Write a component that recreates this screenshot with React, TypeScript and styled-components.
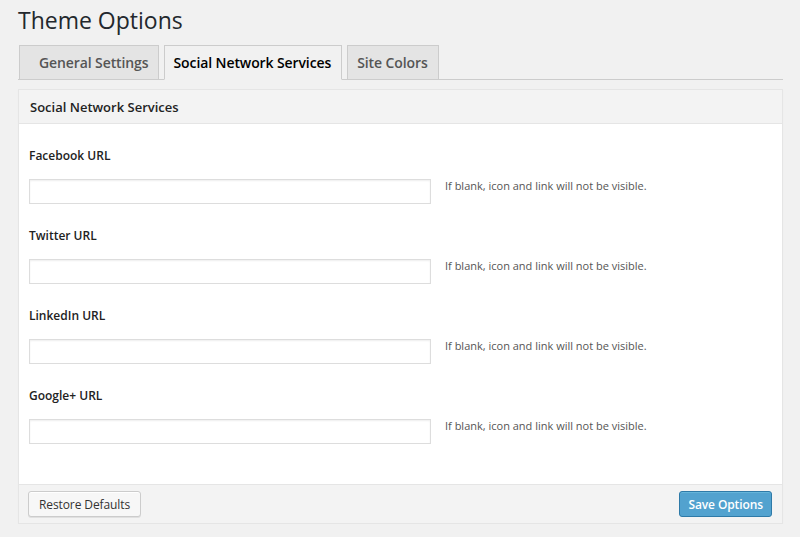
import { FC } from 'react';
import styled, { createGlobalStyle } from 'styled-components';

const GlobalStyle = createGlobalStyle`
  body {
    margin: 0;
    background: #f1f1f1;
    font-family: "Open Sans", "Liberation Sans", sans-serif;
    color: #222;
  }
`;

const Wrap = styled.div`
  width: 765px;
  padding: 6px 0 0 18px;
`;

const Title = styled.h1`
  margin: 0;
  font-size: 23px;
  font-weight: 400;
  line-height: 29px;
  color: #23282d;
`;

const TabBar = styled.div`
  display: flex;
  gap: 5px;
  margin-top: 10px;
  padding-left: 1px;
  border-bottom: 1px solid #cccccc;
  height: 34px;
`;

const Tab = styled.div<{ $active?: boolean; $first?: boolean }>`
  display: flex;
  align-items: center;
  padding: 0 ${(p) => (p.$first ? '9px' : '10px')} 0 ${(p) => (p.$first ? '19px' : '9px')};
  height: ${(p) => (p.$active ? '35px' : '34px')};
  box-sizing: border-box;
  border: 1px solid #cccccc;
  border-bottom: ${(p) => (p.$active ? '1px solid #f1f1f1' : 'none')};
  background: ${(p) => (p.$active ? '#f1f1f1' : '#e4e4e4')};
  color: ${(p) => (p.$active ? '#000' : '#555')};
  font-size: 14px;
  font-weight: 600;
  letter-spacing: -0.1px;
`;

const Panel = styled.div`
  margin-top: 9px;
  border: 1px solid #e5e5e5;
  box-shadow: 0 1px 1px rgba(0, 0, 0, 0.04);
  background: #fff;
`;

const PanelHeader = styled.div`
  height: 33px;
  display: flex;
  align-items: center;
  padding-left: 11px;
  background: #f3f3f3;
  border-bottom: 1px solid #e5e5e5;
  font-size: 13px;
  font-weight: 600;
  color: #222;
`;

const PanelBody = styled.div`
  padding: 23px 10px 17px;
  display: flex;
  flex-direction: column;
`;

const Field = styled.div`
  height: 80px;
`;

const Label = styled.div`
  font-size: 12px;
  font-weight: 600;
  line-height: 18px;
  color: #222;
`;

const InputRow = styled.div`
  display: flex;
  align-items: center;
  gap: 14px;
  margin-top: 14px;
`;

const Input = styled.input`
  width: 402px;
  height: 25px;
  box-sizing: border-box;
  border: 1px solid #dddddd;
  box-shadow: inset 0 1px 2px rgba(0, 0, 0, 0.07);
  background: #fff;
  margin: 0;
`;

const Help = styled.span`
  font-size: 11px;
  color: #555;
  margin-top: -13px;
`;

const PanelFooter = styled.div`
  height: 38px;
  display: flex;
  align-items: center;
  justify-content: space-between;
  padding: 0 10px 0 9px;
  background: #f3f3f3;
  border-top: 1px solid #e5e5e5;
`;

const Button = styled.button<{ $primary?: boolean }>`
  height: 26px;
  padding: 0 ${(p) => (p.$primary ? '8px' : '10px')};
  border-radius: 3px;
  font-family: "Open Sans", "Liberation Sans", sans-serif;
  font-size: 12px;
  letter-spacing: -0.1px;
  font-weight: ${(p) => (p.$primary ? 600 : 400)};
  border: 1px solid ${(p) => (p.$primary ? '#2e7aa8' : '#cccccc')};
  background: ${(p) => (p.$primary ? '#52a2cf' : '#f7f7f7')};
  color: ${(p) => (p.$primary ? '#fff' : '#333')};
  box-shadow: ${(p) =>
    p.$primary ? 'inset 0 1px 0 rgba(120,200,230,0.5)' : 'inset 0 1px 0 #fff, 0 1px 0 rgba(0,0,0,0.08)'};
`;

const fields = ['Facebook URL', 'Twitter URL', 'LinkedIn URL', 'Google+ URL'];

const App: FC = () => {
  return (
    <Wrap>
      <GlobalStyle />
      <Title>Theme Options</Title>
      <TabBar>
        <Tab $first>General Settings</Tab>
        <Tab $active>Social Network Services</Tab>
        <Tab>Site Colors</Tab>
      </TabBar>
      <Panel>
        <PanelHeader>Social Network Services</PanelHeader>
        <PanelBody>
          {fields.map((f) => (
            <Field key={f}>
              <Label>{f}</Label>
              <InputRow>
                <Input type="text" />
                <Help>If blank, icon and link will not be visible.</Help>
              </InputRow>
            </Field>
          ))}
        </PanelBody>
        <PanelFooter>
          <Button>Restore Defaults</Button>
          <Button $primary>Save Options</Button>
        </PanelFooter>
      </Panel>
    </Wrap>
  );
};

export default App;
